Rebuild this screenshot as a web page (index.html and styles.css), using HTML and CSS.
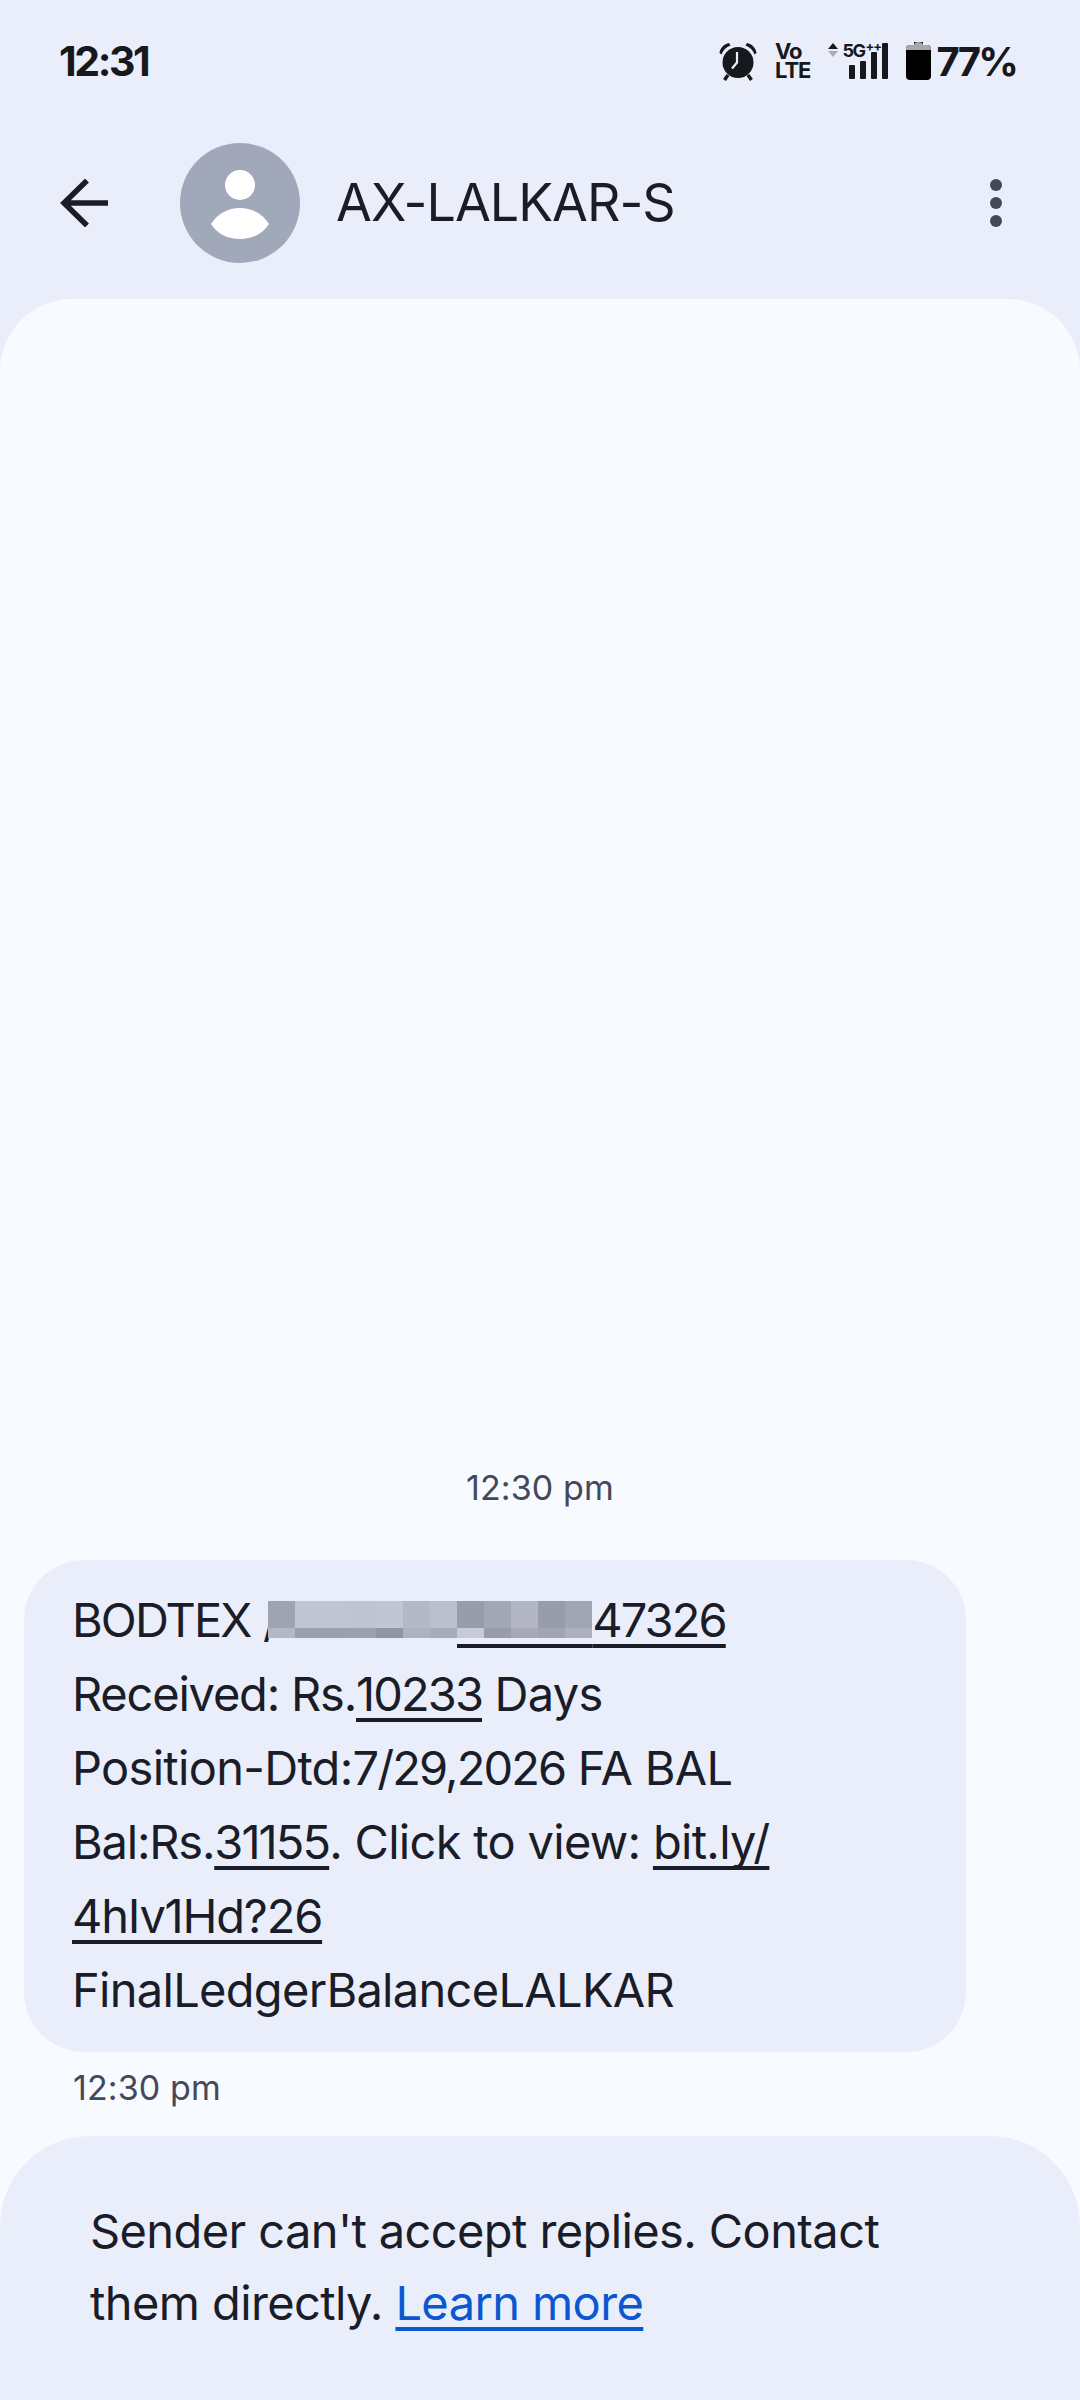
FILE: index.html
```html
<!DOCTYPE html>
<html lang="en">
<head>
  <meta charset="UTF-8" />
  <meta name="viewport" content="width=device-width, initial-scale=1.0"/>
  <title>AX-LALKAR-S</title>
  <link rel="stylesheet" href="styles.css">
</head>
<body>

  <div class="status-bar">
    <span class="clock">12:31</span>
    <div class="status-icons">
      <svg class="ic-alarm" width="38" height="39" viewBox="0 0 38 39">
        <circle cx="19" cy="20.5" r="15.5" fill="#17181c"/>
        <path d="M18 10v10.500l-5 6" fill="none" stroke="#e9eefa" stroke-width="2.2"/>
        <path d="M0.500 11 C1 6 5 2 10 1 L11.500 3.500 C7 5 4 8 2.500 12.500Z M37.500 11 C37 6 33 2 28 1 L26.500 3.500 C31 5 34 8 35.500 12.500Z" fill="#17181c"/>
        <path d="M9 33l-3.500 5M29 33l3.500 5" stroke="#17181c" stroke-width="3.400" fill="none"/>
      </svg>
      <span class="volte"><span>Vo</span><span>LTE</span></span>
      <div class="signal">
        <span class="arrows"><i class="up"></i><i class="down"></i></span>
        <span class="net">5G</span>
        <span class="plus">++</span>
        <span class="bars"><i class="b1"></i><i class="b2"></i><i class="b3"></i><i class="b4"></i></span>
      </div>
      <svg class="ic-batt" width="25" height="38" viewBox="0 0 25 38">
        <path d="M8 0h9v3h4a4 4 0 0 1 4 4v27a4 4 0 0 1-4 4H4a4 4 0 0 1-4-4V7a4 4 0 0 1 4-4h4Z" fill="#000"/>
        <path d="M8 3a4.500 3 0 0 1 9 0h4a4 4 0 0 1 4 4v1H0V7a4 4 0 0 1 4-4h4Z" fill="#a5a8af"/>
      </svg>
      <span class="percent">77%</span>
    </div>
  </div>

  <header class="top-bar">
    <svg class="ic-back" width="48" height="48" viewBox="0 0 48 48">
      <path d="M48 24H4M27 1.500 4 24l23 22.500" fill="none" stroke="#1a1c28" stroke-width="5.500"/>
    </svg>
    <svg class="avatar" width="120" height="120" viewBox="0 0 120 120">
      <circle cx="60" cy="60" r="60" fill="#a0a8b9"/>
      <circle cx="60" cy="42" r="15" fill="#fff"/>
      <path d="M31 81C37 71 48 65 60 65s23 6 29 16c-6 10-17 15-29 15s-23-5-29-15Z" fill="#fff"/>
    </svg>
    <span class="sender">AX-LALKAR-S</span>
    <div class="menu"><i></i><i></i><i></i></div>
  </header>

  <main class="panel">
    <div class="time time-center">12:30 pm</div>
    <div class="bubble">
      <span class="caps">BODTEX</span> /<span class="mosaic">
        <i style="background:#a0a4b2"></i><i style="background:#c0c5d2"></i><i style="background:#c1c5d2"></i><i style="background:#bfc4d1"></i><i style="background:#c2c6d3"></i><i style="background:#b4b9c7"></i><i style="background:#bbc0cd"></i>
        <i style="background:#b4b7c4"></i><i style="background:#9ba0ae"></i><i style="background:#9ca0ae"></i><i style="background:#9ca1af"></i><i style="background:#9096a6"></i><i style="background:#adb2c0"></i><i style="background:#a7acba"></i>
      </span><span class="link"><span class="mosaic mosaic-link">
        <i style="background:#989cac"></i><i style="background:#a3a7b6"></i><i style="background:#b3b7c5"></i><i style="background:#989cab"></i><i style="background:#a2a6b4"></i>
        <i style="background:#c7cbd9"></i><i style="background:#989cab"></i><i style="background:#a7a9b8"></i><i style="background:#a1a5b3"></i><i style="background:#adb1bf"></i>
      </span><span class="caps">47326</span></span><br>
      <span class="tight">Received: Rs.</span><span class="link caps">10233</span> Days<br>
      Position-Dtd:<span class="caps">7/29,2026</span> FA BAL<br>
      <span class="tight">Bal:Rs.</span><span class="link caps">31155</span>. Click to view: <span class="link">bit.ly/</span><br>
      <span class="link tight">4hIv1Hd?26</span><br>
      FinalLedgerBalanceLALKAR
    </div>
    <div class="time time-left">12:30 pm</div>
    <footer class="notice">
      Sender can't accept replies. Contact<br>
      them directly. <a class="learn" href="#">Learn more</a>
    </footer>
  </main>

</body>
</html>
```

FILE: styles.css
```css
* {
  box-sizing: border-box;
}

body {
  width: 1080px;
  height: 2400px;
  margin: 0;
  overflow: hidden;
  display: flex;
  flex-direction: column;
  background-color: #e9eefa;
  color: #1a1c28;
  font-family: Inter, "Noto Sans", sans-serif;
}

/* status bar */
.status-bar {
  height: 122px;
  padding: 0 64px 0 59px;
  display: flex;
  align-items: center;
  justify-content: space-between;
  color: #17181c;
}

.clock {
  font-size: 41px;
  font-weight: 700;
  letter-spacing: -2.4px;
}

.status-icons {
  display: flex;
  align-items: center;
}

.volte {
  margin-left: 18px;
  display: flex;
  flex-direction: column;
  font-size: 22px;
  font-weight: 700;
  line-height: 19px;
  letter-spacing: -1px;
}

.signal {
  position: relative;
  width: 60px;
  height: 36px;
  margin-left: 18px;
}

.arrows {
  position: absolute;
  left: 0;
  top: 0;
}

.arrows i {
  display: block;
  width: 0;
  height: 0;
  border-left: 5px solid transparent;
  border-right: 5px solid transparent;
  margin-bottom: 2px;
}

.arrows .up {
  border-bottom: 6px solid #17181c;
}

.arrows .down {
  border-top: 6px solid #a9acb4;
}

.net {
  position: absolute;
  left: 14px;
  top: -2px;
  font-size: 18px;
  font-weight: 700;
  line-height: 20px;
  letter-spacing: -1.5px;
}

.plus {
  position: absolute;
  left: 37px;
  top: -5px;
  font-size: 13px;
  font-weight: 700;
  line-height: 16px;
  letter-spacing: -1px;
}

.bars {
  position: absolute;
  right: 0;
  bottom: 0;
  display: flex;
  align-items: flex-end;
  gap: 5px;
}

.bars i {
  display: block;
  width: 6px;
  border-radius: 1px;
  background: #17181c;
}

.b1 {
  height: 14px;
}

.b2 {
  height: 18px;
}

.b3 {
  height: 27px;
}

.b4 {
  height: 36px;
}

.ic-batt {
  margin-left: 18px;
}

.percent {
  margin-left: 5px;
  font-size: 40px;
  font-weight: 700;
  letter-spacing: -2.8px;
}

/* top bar */
.top-bar {
  height: 177px;
  padding: 0 0 16px 60px;
  display: flex;
  align-items: center;
}

.avatar {
  margin-left: 72px;
}

.sender {
  margin-left: 36px;
  font-size: 52px;
  font-weight: 400;
  letter-spacing: -1px;
}

.menu {
  margin-left: auto;
  margin-right: 78px;
  display: flex;
  flex-direction: column;
  gap: 6px;
}

.menu i {
  display: block;
  width: 12px;
  height: 12px;
  border-radius: 50%;
  background: #43485a;
}

/* messages */
.panel {
  flex: 1;
  display: flex;
  flex-direction: column;
  justify-content: flex-end;
  background-color: #f7fbff;
  border-radius: 72px 72px 0 0;
}

.time {
  color: #45485a;
  font-size: 34px;
  line-height: 44px;
  letter-spacing: 0.1px;
}

.time-center {
  text-align: center;
  margin-bottom: 50px;
}

.time-left {
  margin: 14px 0 26px 73px;
}

.bubble {
  width: 942px;
  margin-left: 24px;
  padding: 23px 20px 25px 48px;
  background-color: #e9eefa;
  border-radius: 60px;
  font-size: 47px;
  line-height: 74px;
  letter-spacing: -0.7px;
}

.caps {
  letter-spacing: -1.9px;
}

.tight {
  letter-spacing: -1.2px;
}

.link {
  text-decoration: underline;
  text-decoration-thickness: 4px;
  text-underline-offset: 7px;
  text-decoration-skip-ink: none;
}

.mosaic {
  display: inline-grid;
  grid-template-columns: repeat(7, 27px);
  grid-template-rows: 27px 10px;
  vertical-align: 9px;
  margin-left: -11px;
}

.mosaic-link {
  grid-template-columns: repeat(5, 27px);
  margin-left: 0;
  box-shadow: 0 6px 0 #e9eefa, 0 10px 0 #1a1c28;
}

.notice {
  height: 264px;
  padding: 59px 40px 0 90px;
  background-color: #e9eefa;
  border-radius: 90px 90px 0 0;
  font-size: 47px;
  line-height: 72px;
  letter-spacing: -0.6px;
}

.learn {
  color: #0b57d0;
  text-decoration: underline;
  text-decoration-thickness: 4px;
  text-underline-offset: 7px;
  text-decoration-skip-ink: none;
}
```
